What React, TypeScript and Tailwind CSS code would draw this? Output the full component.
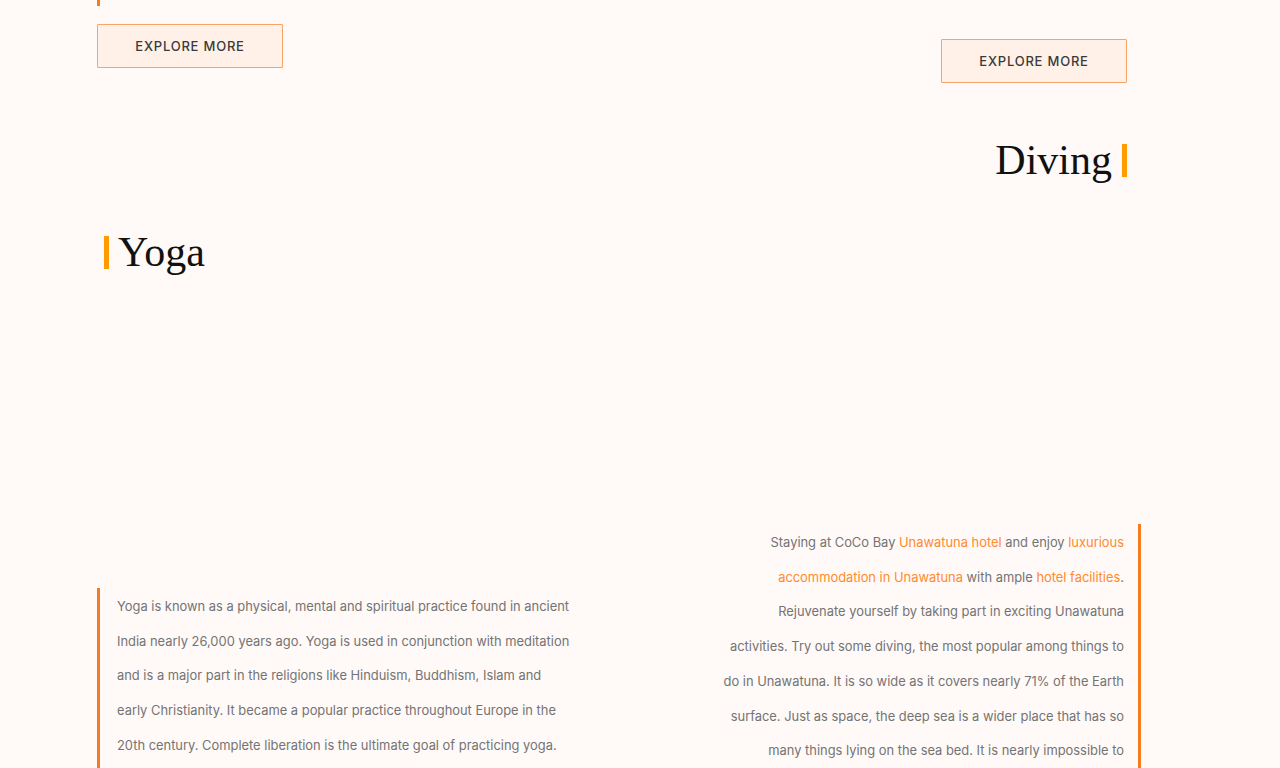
import type { ReactNode } from 'react';

const Link = ({ children }: { children: ReactNode }) => (
  <a href="#" className="text-[#ff8a2e]">
    {children}
  </a>
);

const ExploreButton = () => (
  <button className="w-[186px] h-[44px] pt-[1px] border border-[#f9a463] bg-[#fff1e7] text-[13px] font-medium tracking-[0.06em] text-[#3a3a3a] rounded-[1px]">
    EXPLORE MORE
  </button>
);

export default function App() {
  return (
    <div
      className="min-h-[768px] h-[768px] overflow-hidden bg-[#fffaf8]"
      style={{ fontFamily: 'Inter, "Liberation Sans", sans-serif' }}
    >
      <div className="ml-[97px] w-[1044px] flex justify-between">
        {/* Yoga column */}
        <div className="flex flex-col w-[483px]">
          <div className="w-[3px] h-[6px] bg-[#f47b20]" />
          <div className="mt-[18px]">
            <ExploreButton />
          </div>
          <div className="mt-[162px] ml-[7px] flex items-center gap-[9px]">
            <span className="w-[5px] h-[33px] bg-[#ff9a00]" />
            <h2
              className="text-[42px] leading-[44px] text-[#111]"
              style={{ fontFamily: '"Liberation Serif", serif' }}
            >
              Yoga
            </h2>
          </div>
          <div className="mt-[314px] border-l-[3px] border-[#f47b20] pl-[17px] pr-[8px] pb-[30px]">
            <p className="text-[12.9px] leading-[34.7px] text-[#747474] pt-[2px]">
              Yoga is known as a physical, mental and spiritual practice found in ancient India nearly 26,000 years ago.
              Yoga is used in conjunction with meditation and is a major part in the religions like Hinduism, Buddhism,
              Islam and early Christianity. It became a popular practice throughout Europe in the 20th century. Complete
              liberation is the ultimate goal of practicing yoga.
            </p>
          </div>
        </div>

        {/* Diving column */}
        <div className="flex flex-col items-end w-[440px]">
          <div className="mt-[39px] mr-[14px]">
            <ExploreButton />
          </div>
          <div className="mt-[55px] mr-[14px] flex items-center gap-[10px]">
            <h2
              className="text-[42px] leading-[44px] text-[#111]"
              style={{ fontFamily: '"Liberation Serif", serif' }}
            >
              Diving
            </h2>
            <span className="w-[5px] h-[33px] bg-[#ff9a00]" />
          </div>
          <div className="mt-[342px] w-[431px] border-r-[3px] border-[#f47b20] pr-[14px] pl-[10px]">
            <p className="text-right text-[12.9px] leading-[34.7px] text-[#747474] pt-[2px]">
              Staying at CoCo Bay <Link>Unawatuna hotel</Link> and enjoy <Link>luxurious accommodation in Unawatuna</Link>{' '}
              with ample <Link>hotel facilities</Link>. Rejuvenate yourself by taking part in exciting Unawatuna
              activities. Try out some diving, the most popular among things to do in Unawatuna. It is so wide as it
              covers nearly 71% of the Earth surface. Just as space, the deep sea is a wider place that has so many
              things lying on the sea bed. It is nearly impossible to explore all of it in a lifetime.
            </p>
          </div>
        </div>
      </div>
    </div>
  );
}
